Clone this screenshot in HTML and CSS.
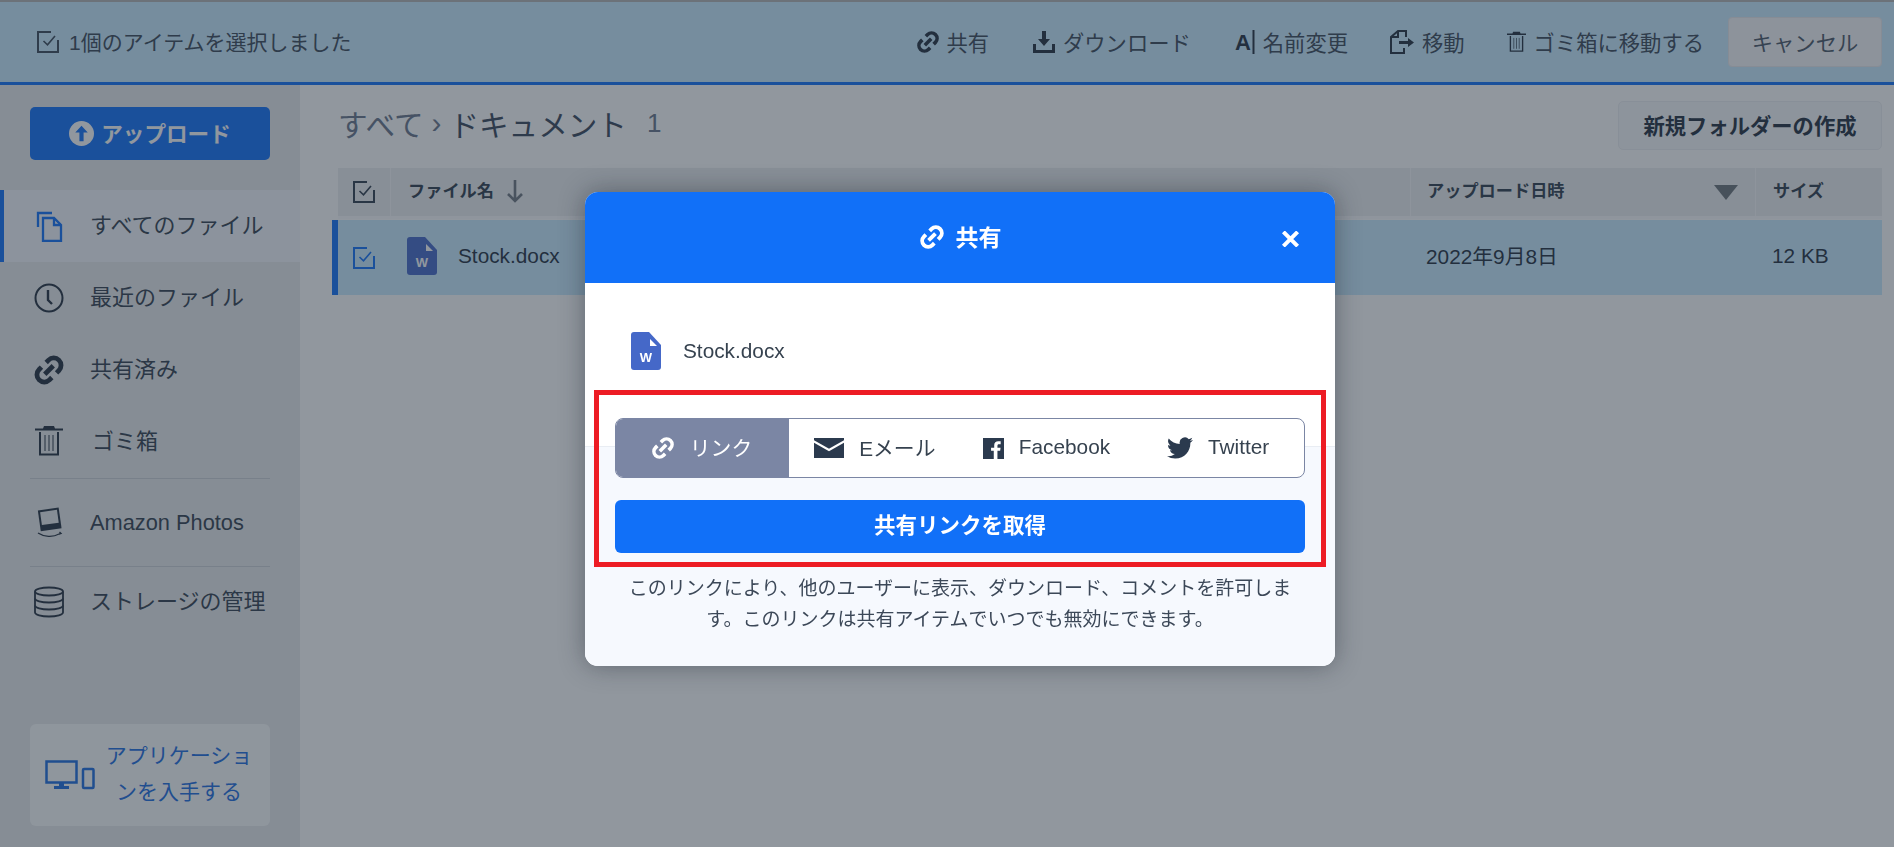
FILE: index.html
```html
<!DOCTYPE html>
<html lang="ja">
<head>
<meta charset="utf-8">
<title>Amazon Drive</title>
<link rel="stylesheet" href="styles.css">
</head>
<body>
<svg class="defs" width="0" height="0" aria-hidden="true">
  <symbol id="i-link" viewBox="0 0 24 24"><g transform="rotate(-45 12 12)" fill="none" stroke="currentColor" stroke-width="3.6"><path d="M9.500 6.500H7a5.500 5.500 0 0 0 0 11h2.500"/><path d="M14.500 6.500H17a5.500 5.500 0 0 1 0 11h-2.500"/><path d="M7.500 12h9"/></g></symbol>
  <symbol id="i-check" viewBox="0 0 22 22"><g fill="none" stroke="currentColor" stroke-width="2"><path d="M14 1H1v20h20V9"/><path d="M6.500 10l4 3.800 7.500-8.800" stroke-width="1.6"/></g></symbol>
  <symbol id="i-trash" viewBox="0 0 28 30"><path fill="currentColor" d="M9 0h10l1 2.500h8v2H0v-2h8z"/><path fill="none" stroke="currentColor" stroke-width="2" d="M5 6v22.500h18V6"/><path fill="none" stroke="currentColor" stroke-width="1" d="M10 9v16M14 9v16M18 9v16"/></symbol>
</svg>

<div class="page">
  <header class="topbar">
    <div class="selected">
      <svg class="ico-22"><use href="#i-check"/></svg>
      <span class="lbl">1個のアイテムを選択しました</span>
    </div>
    <div class="actions">
      <span class="action"><svg class="ico-link"><use href="#i-link"/></svg><span class="lbl">共有</span></span>
      <span class="action"><svg class="ico-22" viewBox="0 0 22 22"><path fill="currentColor" d="M9 0h4v8h4l-6 7-6-7h4z"/><path fill="none" stroke="currentColor" stroke-width="3" d="M1.500 13v7.500h19V13"/></svg><span class="lbl">ダウンロード</span></span>
      <span class="action"><svg class="ico-rename" viewBox="0 0 20 24"><text x="0" y="20" class="rename-a">A</text><path fill="currentColor" d="M17.500 0h2v24h-2z"/></svg><span class="lbl">名前変更</span></span>
      <span class="action near"><svg class="ico-move" viewBox="0 0 24 24"><path fill="none" stroke="currentColor" stroke-width="2" d="M8 1h8v6M14 18v5H1V7l7-6v6H2"/><path fill="currentColor" d="M9 11h9V8l6 4.500-6 4.500v-3H9z"/></svg><span class="lbl">移動</span></span>
      <span class="action near"><svg class="ico-trash-s"><use href="#i-trash"/></svg><span class="lbl">ゴミ箱に移動する</span></span>
      <button class="cancel"><span class="lbl">キャンセル</span></button>
    </div>
  </header>

  <div class="body">
    <aside class="sidebar">
      <button class="upload">
        <svg class="ico-upload" viewBox="0 0 24 24"><circle cx="12" cy="12" r="12" fill="#fff"/><path fill="#1170f8" d="M12 4.500l6 6.500h-4v8.500h-4V11H6z"/></svg>
        <span class="lbl">アップロード</span>
      </button>
      <nav class="nav">
        <a class="nav-item active">
          <svg class="nav-ico blue" viewBox="0 0 32 32"><g fill="none" stroke="currentColor" stroke-width="2.300"><path d="M5 17V3h14"/><path d="M10 8h11l7 7v16H10z"/><path d="M21 8v7h7"/></g></svg>
          <span class="nav-text">すべてのファイル</span>
        </a>
        <a class="nav-item">
          <svg class="nav-ico" viewBox="0 0 32 32"><circle cx="16" cy="16" r="13.500" fill="none" stroke="currentColor" stroke-width="2"/><path fill="none" stroke="currentColor" stroke-width="2.400" d="M15 8v10l4 4"/></svg>
          <span class="nav-text">最近のファイル</span>
        </a>
        <a class="nav-item">
          <svg class="nav-ico"><use href="#i-link"/></svg>
          <span class="nav-text">共有済み</span>
        </a>
        <a class="nav-item">
          <svg class="nav-ico trash"><use href="#i-trash"/></svg>
          <span class="nav-text">ゴミ箱</span>
        </a>
        <a class="nav-item amazon">
          <svg class="nav-ico" viewBox="0 0 32 32"><g transform="rotate(-8 16 11)"><rect x="6" y="2" width="21" height="21" fill="currentColor"/><rect x="8" y="4" width="17" height="13" fill="#e9ebed"/></g><path fill="none" stroke="currentColor" stroke-width="1.300" d="M5 26c6 4 15 4.500 21 1M26 27l2-.5-1.500-1.500"/></svg>
          <span>Amazon Photos</span>
        </a>
        <a class="nav-item storage">
          <svg class="nav-ico" viewBox="0 0 32 32"><g fill="none" stroke="currentColor" stroke-width="1.800"><ellipse cx="16" cy="5.500" rx="14" ry="4"/><path d="M2 5.500v21c0 2.200 6.300 4 14 4s14-1.800 14-4v-21"/><path d="M2 12.500c0 2.200 6.300 4 14 4s14-1.800 14-4M2 19.500c0 2.200 6.300 4 14 4s14-1.800 14-4"/></g></svg>
          <span class="nav-text">ストレージの管理</span>
        </a>
      </nav>
      <div class="app-box">
        <svg class="ico-app" viewBox="0 0 50 30"><g fill="none" stroke="currentColor" stroke-width="2.500"><rect x="1.500" y="1.500" width="30" height="21"/><rect x="38" y="9" width="10.500" height="19" rx="1"/></g><path fill="currentColor" d="M14 23h5v3h5v3H9v-3h5z"/></svg>
        <span class="app-text">アプリケーションを入手する</span>
      </div>
    </aside>

    <main class="content">
      <div class="titlebar">
        <div class="crumbs">
          <span class="muted">すべて</span><span class="sep">›</span><span class="current">ドキュメント</span><span class="count">1</span>
        </div>
        <button class="new-folder"><span class="lbl">新規フォルダーの作成</span></button>
      </div>
      <div class="thead">
        <div class="c-check"><svg class="ico-22"><use href="#i-check"/></svg></div>
        <div class="c-name head-name"><span class="head-text">ファイル名</span>
          <svg class="ico-arrow" viewBox="0 0 18 24"><path fill="none" stroke="currentColor" stroke-width="2.600" d="M9 1v21M2 15l7 7 7-7"/></svg>
        </div>
        <div class="c-date head-date"><span class="head-text">アップロード日時</span><i class="tri"></i></div>
        <div class="c-size"><span class="head-text">サイズ</span></div>
      </div>
      <div class="trow">
        <div class="c-check blue"><svg class="ico-22"><use href="#i-check"/></svg></div>
        <div class="c-name row-name">
          <svg class="ico-doc" viewBox="0 0 30 38"><path fill="#4568c8" d="M3 0h15l12 13v22a3 3 0 0 1-3 3H3a3 3 0 0 1-3-3V3a3 3 0 0 1 3-3z"/><path fill="#fff" d="M19 7l7 7h-7z"/><text x="15" y="30" text-anchor="middle" class="doc-w">W</text></svg>
          <span class="row-text">Stock.docx</span>
        </div>
        <div class="c-date"><span class="row-text date">2022年9月8日</span></div>
        <div class="c-size"><span class="row-text">12 KB</span></div>
      </div>
    </main>
  </div>
</div>

<div class="overlay">
  <section class="modal">
    <header class="modal-head">
      <svg class="ico-title"><use href="#i-link"/></svg>
      <h2 class="modal-title">共有</h2>
      <svg class="close" viewBox="0 0 20 18"><path fill="none" stroke="#fff" stroke-width="4.500" d="M2 1l16 16M18 1L2 17"/></svg>
    </header>
    <div class="file-row">
      <svg class="ico-doc" viewBox="0 0 30 38"><path fill="#4568c8" d="M3 0h15l12 13v22a3 3 0 0 1-3 3H3a3 3 0 0 1-3-3V3a3 3 0 0 1 3-3z"/><path fill="#fff" d="M19 7l7 7h-7z"/><text x="15" y="30" text-anchor="middle" class="doc-w">W</text></svg>
      <span>Stock.docx</span>
    </div>
    <div class="share">
      <div class="tabs">
        <div class="tab on"><svg class="ico-tab"><use href="#i-link"/></svg><span class="tab-text">リンク</span></div>
        <div class="tab"><svg class="ico-mail" viewBox="0 0 30 20"><rect width="30" height="20" fill="currentColor"/><path fill="none" stroke="#fff" stroke-width="2.200" d="M-1 3l16 9 16-9"/></svg><span class="tab-text">Eメール</span></div>
        <div class="tab"><svg class="ico-fb" viewBox="0 0 24 24"><rect width="24" height="24" fill="currentColor"/><path fill="#fff" d="M16.500 24v-9.300h3.100l.5-3.600h-3.600V8.800c0-1 .3-1.800 1.800-1.800h1.900V3.800c-.3 0-1.500-.1-2.800-.1-2.700 0-4.600 1.700-4.600 4.700v2.700H9.200v3.600h3.100V24z"/></svg><span class="tab-text">Facebook</span></div>
        <div class="tab"><svg class="ico-tw" viewBox="0 0 24 24"><path fill="currentColor" d="M23.950 4.570a10 10 0 0 1-2.820.77 4.960 4.960 0 0 0 2.160-2.720c-.95.55-2 .96-3.130 1.190a4.920 4.920 0 0 0-8.380 4.480C7.690 8.100 4.070 6.130 1.640 3.160a4.930 4.930 0 0 0 1.520 6.570 4.900 4.900 0 0 1-2.230-.61v.06a4.920 4.920 0 0 0 3.950 4.830 5 5 0 0 1-2.210.08 4.940 4.940 0 0 0 4.600 3.420A9.870 9.870 0 0 1 0 19.540a13.940 13.940 0 0 0 7.550 2.210c9.050 0 14-7.500 14-13.980 0-.21 0-.42-.02-.63a9.940 9.940 0 0 0 2.460-2.550z"/></svg><span class="tab-text">Twitter</span></div>
      </div>
      <button class="get-link"><span class="get-text">共有リンクを取得</span></button>
      <p class="note">このリンクにより、他のユーザーに表示、ダウンロード、コメントを許可します。このリンクは共有アイテムでいつでも無効にできます。</p>
    </div>
    <div class="annotation"></div>
  </section>
</div>
</body>
</html>
```
FILE: styles.css
```css
* { box-sizing: border-box; }
html, body { margin: 0; height: 100%; }
body {
  font-family: "Liberation Sans", "Noto Sans CJK JP", sans-serif;
  color: #232f3e;
  background: #fff;
  overflow: hidden;
}
svg { display: block; flex: none; }
.defs { position: absolute; }
button { font-family: inherit; color: inherit; cursor: pointer; }
.lbl { display: block; margin-bottom: 2px; }

.page { display: flex; flex-direction: column; height: 847px; }

/* top bar */
.topbar {
  height: 85px;
  flex: none;
  display: flex;
  align-items: center;
  justify-content: space-between;
  padding: 0 12px 0 37px;
  background: #c9ebff;
  border-top: 2px solid #b4b4b4;
  border-bottom: 3px solid #1170f8;
  font-size: 21.300px;
  color: #3a4858;
}
.selected { display: flex; align-items: center; gap: 10px; font-size: 21px; }
.ico-22 { width: 22px; height: 22px; }
.actions { display: flex; align-items: center; gap: 44px; }
.action { display: flex; align-items: center; gap: 8px; }
.action.near { margin-left: -2px; }
.action svg { color: #232f3e; }
.ico-link { width: 24px; height: 24px; margin-right: -2px; }
.ico-rename { width: 20px; height: 24px; }
.rename-a { font: bold 22px "Liberation Sans", sans-serif; fill: currentColor; }
.ico-move { width: 24px; height: 24px; }
.ico-trash-s { width: 19px; height: 24px; }
.cancel {
  width: 154px;
  height: 50px;
  margin-left: -20px;
  font-size: 21.300px;
  border: 1px solid #e8e8ec;
  border-radius: 4px;
  background: #f6f6f9;
  color: #4a5666;
}

/* layout */
.body { flex: 1; display: flex; min-height: 0; }
.sidebar {
  width: 300px;
  flex: none;
  display: flex;
  flex-direction: column;
  background: #e9ebed;
  padding-top: 22px;
}
.upload {
  width: 240px;
  height: 53px;
  margin: 0 30px 30px;
  flex: none;
  display: flex;
  align-items: center;
  justify-content: center;
  gap: 7px;
  border: 0;
  border-radius: 5px;
  background: #1170f8;
  color: #fff;
  font-size: 21.600px;
  font-weight: 700;
}
.ico-upload { width: 25px; height: 25px; }

.nav { display: flex; flex-direction: column; }
.nav-item {
  height: 72px;
  display: flex;
  align-items: center;
  padding-left: 29px;
  border-left: 4px solid transparent;
  font-size: 22px;
  color: #333f4f;
}
.nav-text { margin-bottom: 7px; }
.nav-item.active { background: #f4f7fc; border-left-color: #1170f8; }
.nav-ico { width: 32px; height: 32px; margin-right: 25px; color: #232f3e; }
.nav-ico.trash { width: 28px; height: 30px; margin: -2px 29px 0 2px; }
.nav-ico.blue { color: #1170f8; }
.nav-item.amazon, .nav-item.storage { position: relative; }
.nav-item.amazon { height: 89px; font-size: 21.800px; }
.nav-item.storage { height: 70px; }
.nav-item.amazon::before, .nav-item.amazon::after {
  content: "";
  position: absolute;
  left: 26px;
  width: 240px;
  height: 1px;
  background: #cdd1d6;
}
.nav-item.amazon::before { top: 0; }
.nav-item.amazon::after { bottom: 0; }

.app-box {
  margin: auto 30px 21px;
  height: 102px;
  display: flex;
  align-items: center;
  padding-left: 15px;
  border-radius: 6px;
  background: #fbfcfd;
  color: #1c6ce0;
}
.ico-app { width: 50px; height: 30px; }
.app-text {
  width: 152px;
  margin: 0 0 3px 8px;
  font-size: 21px;
  line-height: 36px;
  text-align: center;
}

/* content */
.content { flex: 1; min-width: 0; padding: 16px 12px 0 32px; }
.titlebar { display: flex; justify-content: space-between; align-items: center; margin-bottom: 18px; padding-left: 6px; }
.crumbs { font-size: 29.600px; display: flex; align-items: center; color: #232f3e; margin-bottom: 5px; }
.current { color: #38465a; }
.muted { color: #68758a; }
.sep { margin: 0 8px; color: #68758a; }
.count { margin-left: 20px; color: #68758a; font-size: 26px; }
.new-folder {
  width: 264px;
  height: 49px;
  border: 1px solid #edeff2;
  border-radius: 5px;
  background: #f7f8fa;
  font-size: 21.300px;
  font-weight: 700;
}

.thead, .trow { display: grid; grid-template-columns: 52px 1020px 345px 127px; align-items: stretch; }
.thead {
  height: 51px;
  margin-left: 6px;
  background: #eceef0;
  border-bottom: 3px solid #fbfbfc;
  font-size: 17.200px;
  font-weight: 700;
  color: #2f3c4c;
}
.thead > div { display: flex; align-items: center; }
.thead > div + div { border-left: 1px solid #f8f9fa; }
.head-text { margin-bottom: 5px; }
.c-check { display: flex; align-items: center; justify-content: center; }
.c-name { padding-left: 17px; }
.c-date { padding-left: 16px; }
.c-size { padding-left: 17px; }
.head-name { gap: 12px; }
.ico-arrow { width: 18px; height: 24px; color: #6f7680; margin-bottom: 3px; }
.head-date { justify-content: space-between; padding-right: 17px; }
.tri { width: 0; height: 0; border-left: 12.500px solid transparent; border-right: 12.500px solid transparent; border-top: 15px solid #6b7279; }

.trow {
  height: 75px;
  margin-top: 1px;
  border-left: 6px solid #1170f8;
  background: #c9ebff;
  font-size: 20.800px;
  color: #232f3e;
}
.trow > div { display: flex; align-items: center; }
.row-text { margin-bottom: 4px; }
.row-text.date { margin-bottom: 6px; }
.blue { color: #1170f8; }
.ico-doc { width: 30px; height: 38px; }
.row-name { gap: 21px; }
.row-name .ico-doc { margin-bottom: 3px; }
.doc-w { font: bold 13px "Liberation Sans", sans-serif; fill: #fff; }

/* modal */
.overlay {
  position: fixed;
  inset: 0;
  background: rgba(35, 47, 62, .5);
}
.modal {
  position: absolute;
  left: 585px;
  top: 192px;
  width: 750px;
  height: 474px;
  border-radius: 13px;
  overflow: hidden;
  background: #fff;
  box-shadow: 0 0 26px rgba(20, 28, 40, .4);
  display: flex;
  flex-direction: column;
}
.modal-head {
  position: relative;
  height: 91px;
  flex: none;
  display: flex;
  align-items: center;
  justify-content: center;
  gap: 11px;
  padding-bottom: 2px;
  background: #1170f8;
  color: #fff;
}
.modal-title { margin: 0 0 2px; font-size: 23px; font-weight: 700; }
.ico-title { width: 26px; height: 26px; }
.close { position: absolute; right: 35px; top: 39px; width: 19px; height: 16px; }
.file-row {
  height: 135px;
  flex: none;
  display: flex;
  align-items: center;
  gap: 22px;
  padding-left: 46px;
  font-size: 20.800px;
  color: #36424f;
}
.share {
  flex: 1;
  padding: 0 30px;
  background: linear-gradient(#fff 28px, #e9edf3 28px, #e9edf3 29px, #f6f9fe 29px);
}
.tabs {
  height: 60px;
  display: grid;
  grid-template-columns: 173px repeat(3, 1fr);
  border: 1.500px solid #7b86a4;
  border-radius: 8px;
  overflow: hidden;
  background: #fff;
  font-size: 20.800px;
  color: #36424f;
}
.tab { display: flex; align-items: center; justify-content: center; gap: 15px; }
.tab-text { margin-bottom: 2px; }
.tab svg { color: #2b3a4e; }
.tab.on { background: #7b86a4; color: #fff; margin: -2px 0 -2px -2px; }
.tab.on svg { color: #fff; }
.ico-tab { width: 24px; height: 24px; }
.ico-mail { width: 30px; height: 20px; }
.ico-fb { width: 21px; height: 21px; }
.ico-tw { width: 26px; height: 26px; }
.get-link {
  display: block;
  width: 100%;
  height: 53px;
  margin-top: 22px;
  border: 0;
  border-radius: 6px;
  background: #1170f8;
  color: #fff;
  font-size: 21.500px;
  font-weight: 700;
}
.get-text { display: block; margin-bottom: 7px; }
.note {
  margin: 20px 10px 0;
  font-size: 19px;
  line-height: 31px;
  text-align: center;
  color: #3c4858;
}
.annotation {
  position: absolute;
  left: 9px;
  top: 198px;
  width: 732px;
  height: 177px;
  border: 5px solid #ed1c24;
  pointer-events: none;
}
```
